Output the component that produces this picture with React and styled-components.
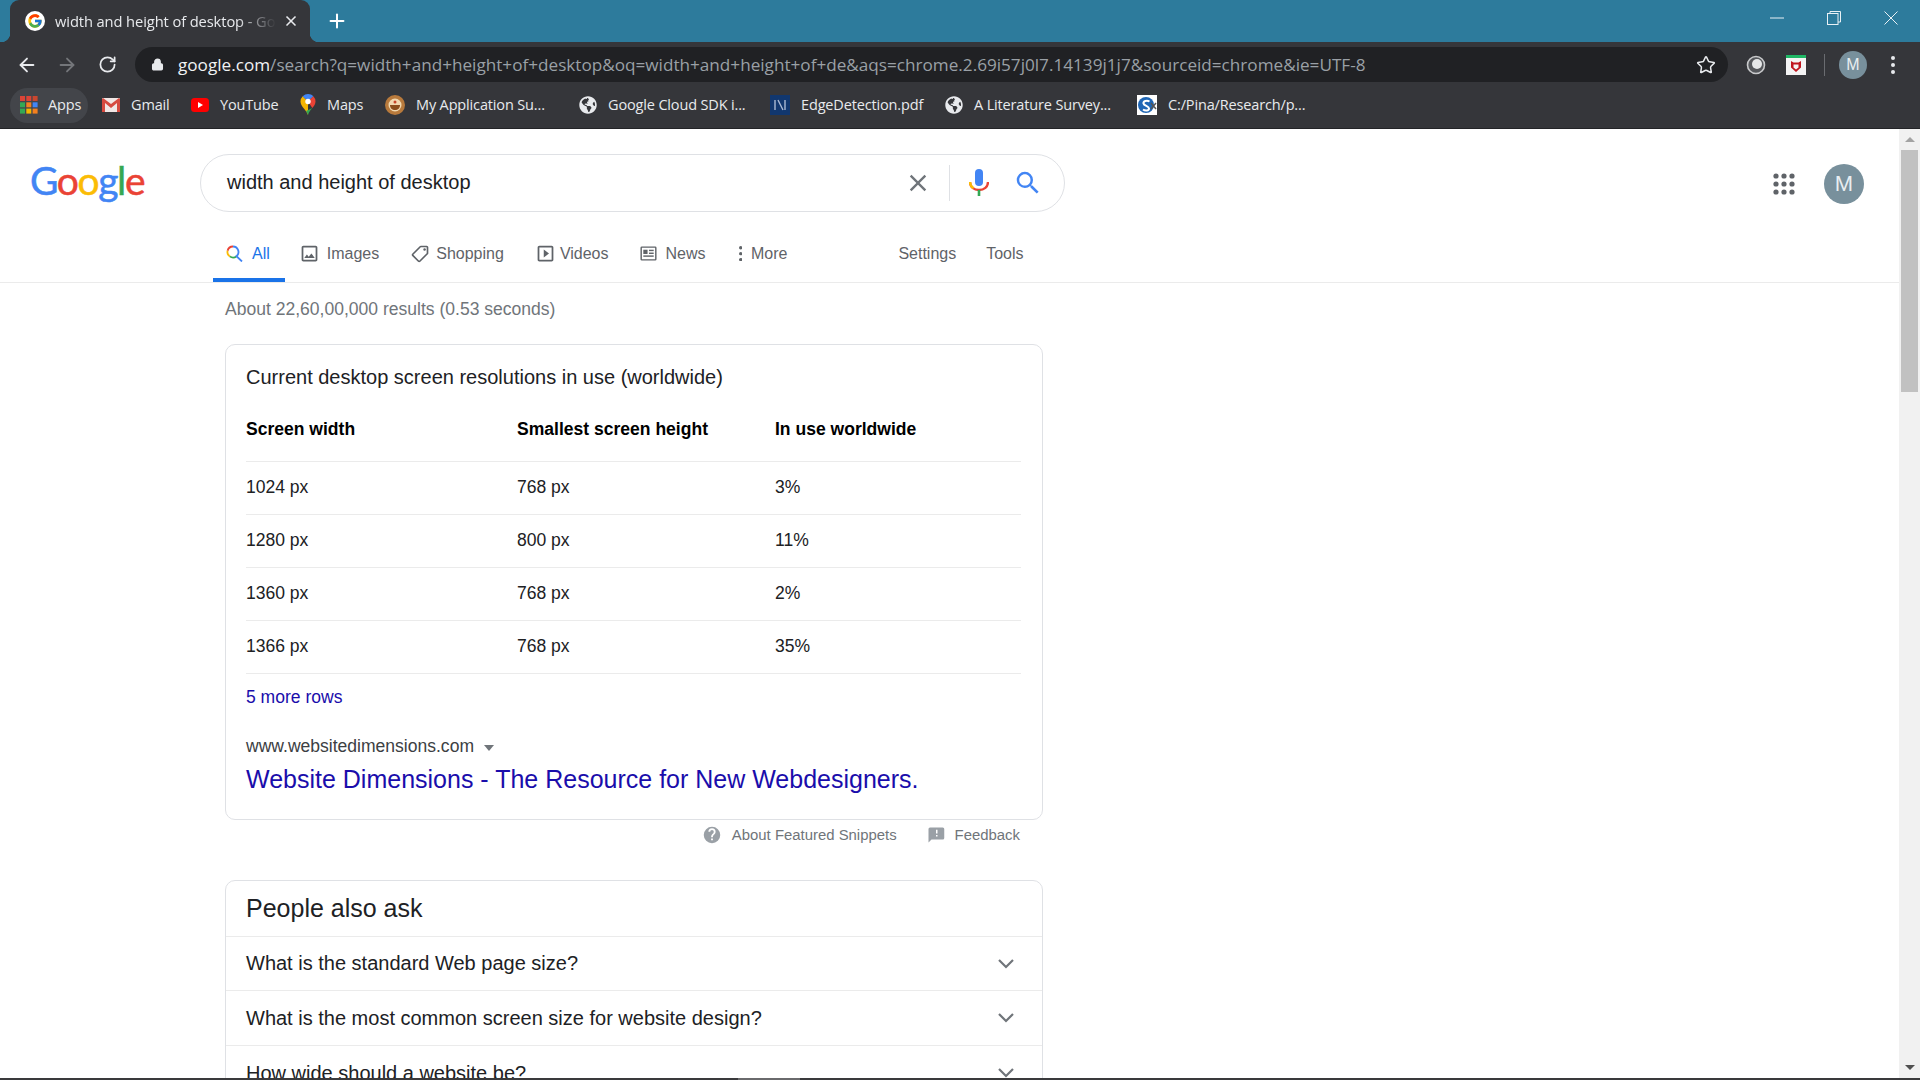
import React from "react";
import styled, { createGlobalStyle } from "styled-components";
import { FaGlobeAmericas } from "react-icons/fa";
import { FcGoogle } from "react-icons/fc";
import { ArrowLeft, ArrowRight, RotateCw, Star, Plus, X, Lock } from "lucide-react";

const ARIAL = `"Liberation Sans", Arial, sans-serif`;
const SEGOE = `"Open Sans", "Noto Sans", sans-serif`;
const BAR = "#35363a";

const GlobalStyle = createGlobalStyle`
  html, body {
    margin: 0;
    padding: 0;
    background: #fff;
    overflow: hidden;
  }
  * { box-sizing: border-box; }
`;

const Screen = styled.div`
  width: 1920px;
  height: 1080px;
  display: flex;
  flex-direction: column;
  overflow: hidden;
  font-family: ${ARIAL};
`;

/* browser chrome */
const TabStrip = styled.div`
  height: 42px;
  flex: none;
  display: flex;
  align-items: stretch;
  background: #2d7b9c;
  padding-left: 10px;
`;
const BrowserTab = styled.div`
  position: relative;
  width: 300px;
  display: flex;
  align-items: center;
  padding: 0 11px 0 15px;
  background: ${BAR};
  border-radius: 9px 9px 0 0;
  color: #e8eaed;
  font-family: ${SEGOE};
  font-size: 14.7px;
  letter-spacing: -0.1px;
  &::before, &::after {
    content: "";
    position: absolute;
    bottom: 0;
    width: 9px;
    height: 9px;
  }
  &::before {
    left: -9px;
    background: radial-gradient(circle at 0 0, transparent 9px, ${BAR} 9.5px);
  }
  &::after {
    right: -9px;
    background: radial-gradient(circle at 100% 0, transparent 9px, ${BAR} 9.5px);
  }
`;
const TabIcon = styled.span`
  width: 20px;
  height: 20px;
  flex: none;
  display: flex;
  align-items: center;
  justify-content: center;
  background: #fff;
  border-radius: 50%;
`;
const TabTitle = styled.span`
  flex: 1;
  margin-left: 10px;
  padding-bottom: 1px;
  white-space: nowrap;
  overflow: hidden;
  -webkit-mask-image: linear-gradient(90deg, #000 80%, transparent 97%);
  mask-image: linear-gradient(90deg, #000 80%, transparent 97%);
`;
const NewTab = styled.span`
  display: flex;
  align-items: center;
  margin-left: 16px;
  color: #fff;
`;
const WindowControls = styled.div`
  margin-left: auto;
  display: flex;
  padding-right: 1px;
`;
const WindowButton = styled.span`
  width: 57px;
  height: 36px;
  display: flex;
  align-items: center;
  justify-content: center;
  color: #e9f1f5;
`;

const Toolbar = styled.div`
  height: 46px;
  flex: none;
  display: flex;
  align-items: flex-start;
  padding: 5px 7px 0;
  background: ${BAR};
`;
const NavButton = styled.span`
  width: 40px;
  height: 35px;
  flex: none;
  display: flex;
  align-items: center;
  justify-content: center;
  color: ${(p) => (p.$disabled ? "#74767a" : "#e8eaed")};
`;
const Omnibox = styled.div`
  flex: 1;
  height: 35px;
  margin: 0 8px;
  display: flex;
  align-items: center;
  padding: 0 12px 0 16px;
  background: #202124;
  border-radius: 18px;
  color: #e8eaed;
`;
const Url = styled.div`
  margin-left: 14px;
  flex: 1;
  font-family: ${SEGOE};
  font-size: 17.15px;
  white-space: nowrap;
  color: #9aa0a6;
  b {
    font-weight: 400;
    color: #f1f3f4;
  }
`;
const Separator = styled.span`
  width: 1px;
  height: 22px;
  margin: 7px 8px 0;
  flex: none;
  background: #6a6c70;
`;
const ProfileBubble = styled.span`
  width: 28px;
  height: 28px;
  border-radius: 50%;
  background: #78909c;
  color: #e8eef1;
  font-size: 16px;
  display: flex;
  align-items: center;
  justify-content: center;
`;

const BookmarkBar = styled.div`
  height: 41px;
  flex: none;
  display: flex;
  align-items: flex-start;
  padding-left: 10px;
  background: ${BAR};
  border-bottom: 1px solid #232427;
  color: #e8eaed;
  font-family: ${SEGOE};
  font-size: 14.5px;
  letter-spacing: -0.15px;
`;
const Bookmark = styled.div`
  width: ${(p) => p.$width}px;
  height: 35px;
  flex: none;
  display: flex;
  align-items: center;
  gap: ${(p) => p.$gap || 11}px;
  padding: 0 0 2px 10px;
  white-space: nowrap;
  border-radius: 18px;
  background: ${(p) => (p.$pill ? "#43454a" : "transparent")};
  margin-right: ${(p) => (p.$pill ? 4 : 0)}px;
`;

/* page */
const Viewport = styled.div`
  flex: 1;
  min-height: 0;
  display: flex;
  background: #fff;
`;
const Page = styled.main`
  flex: 1;
  min-width: 0;
  overflow: hidden;
`;
const SearchHeader = styled.header`
  display: flex;
  align-items: flex-start;
  padding: 25px 35px 0 30px;
`;
const Logo = styled.div`
  width: 170px;
  margin-top: -4px;
  font-family: Lato, sans-serif;
  font-size: 39px;
  font-weight: 400;
  line-height: 60px;
  letter-spacing: -1.4px;
  -webkit-text-stroke: 0.5px currentColor;
`;
const LogoLetter = styled.span`
  color: ${(p) => p.$color};
`;
const SearchBox = styled.div`
  width: 865px;
  height: 58px;
  display: flex;
  align-items: center;
  padding: 0 21px 0 26px;
  border: 1px solid #dfe1e5;
  border-radius: 29px;
  font-size: 20px;
  color: #202124;
`;
const Query = styled.span`
  flex: 1;
  padding-bottom: 2px;
`;
const SearchDivider = styled.span`
  width: 1px;
  height: 36px;
  margin: 0 19px 0 17px;
  background: #dfe1e5;
`;
const MicWrap = styled.span`
  display: flex;
  margin-right: 24px;
`;
const HeaderRight = styled.div`
  margin-left: auto;
  display: flex;
  align-items: center;
  gap: 29px;
  padding-top: 10px;
`;
const Avatar = styled.span`
  width: 40px;
  height: 40px;
  border-radius: 50%;
  background: #78909c;
  color: #e8eef1;
  font-size: 22px;
  display: flex;
  align-items: center;
  justify-content: center;
`;

const TabsRow = styled.nav`
  height: 71px;
  display: flex;
  align-items: flex-end;
  gap: 8px;
  padding-left: 213px;
  border-bottom: 1px solid #ebebeb;
  font-size: 16px;
  color: #5f6368;
`;
const SearchTab = styled.a`
  height: 48px;
  display: flex;
  align-items: center;
  gap: ${(p) => p.$gap || 9}px;
  padding: 0 ${(p) => p.$right || 13}px 5px ${(p) => (p.$active ? 13 : 10)}px;
  margin-right: ${(p) => (p.$active ? -4 : 0)}px;
  color: ${(p) => (p.$active ? "#1a73e8" : "#5f6368")};
  border-bottom: ${(p) => (p.$active ? "4px solid #1a73e8" : "4px solid transparent")};
`;
const TabsTools = styled.div`
  margin-left: 87px;
  display: flex;
  gap: 7px;
`;

const Results = styled.div`
  width: 818px;
  margin-left: 225px;
`;
const Stats = styled.div`
  padding-top: 14px;
  margin-bottom: 23px;
  line-height: 24px;
  font-size: 17.55px;
  color: #70757a;
`;
const Card = styled.section`
  border: 1px solid #dfe1e5;
  border-radius: 10px;
`;
const SnippetBody = styled.div`
  padding: 20px 21px 25px 20px;
`;
const SnippetTitle = styled.div`
  font-size: 20px;
  line-height: 24px;
  color: #202124;
`;
const ResolutionTable = styled.table`
  width: 100%;
  margin-top: 28px;
  border-collapse: collapse;
  table-layout: fixed;
  font-size: 17.55px;
  color: #202124;
`;
const HeadCell = styled.th`
  width: ${(p) => p.$width}px;
  padding: 0 0 20px;
  height: 44px;
  line-height: 24px;
  font-weight: 700;
  text-align: left;
  color: #000;
  border-bottom: 1px solid #ebebeb;
`;
const Cell = styled.td`
  height: 53px;
  padding: 0 0 2px;
  border-bottom: 1px solid #ebebeb;
`;
const MoreRows = styled.a`
  display: block;
  margin-top: 11px;
  line-height: 24px;
  font-size: 17.55px;
  color: #1a0dab;
`;
const Source = styled.div`
  margin-top: 25px;
  display: flex;
  align-items: center;
  gap: 10px;
  line-height: 24px;
  font-size: 17.55px;
  color: #3c4043;
`;
const Caret = styled.span`
  width: 0;
  height: 0;
  margin-top: 3px;
  border-left: 5px solid transparent;
  border-right: 5px solid transparent;
  border-top: 6px solid #70757a;
`;
const ResultLink = styled.a`
  display: block;
  margin-top: 6px;
  line-height: 30px;
  font-size: 25px;
  color: #1a0dab;
`;
const SnippetFooter = styled.div`
  height: 24px;
  margin-top: 3px;
  padding-right: 23px;
  display: flex;
  justify-content: flex-end;
  align-items: center;
  gap: 30px;
  font-size: 14.9px;
  color: #70757a;
`;
const FooterItem = styled.span`
  display: flex;
  align-items: center;
  gap: ${(p) => p.$gap}px;
`;
const AskCard = styled(Card)`
  margin-top: 33px;
  border-radius: 10px 10px 0 0;
`;
const AskTitle = styled.h2`
  margin: 0;
  height: 56px;
  padding-left: 20px;
  display: flex;
  align-items: center;
  font-size: 25px;
  font-weight: 400;
  color: #202124;
  border-bottom: 1px solid #ebebeb;
`;
const Question = styled.div`
  height: ${(p) => p.$height}px;
  padding: 0 28px 0 20px;
  display: flex;
  align-items: center;
  justify-content: space-between;
  font-size: 20px;
  color: #202124;
  border-bottom: 1px solid #ebebeb;
`;

const Scrollbar = styled.aside`
  width: 21px;
  flex: none;
  display: flex;
  flex-direction: column;
  align-items: center;
  background: #f1f1f1;
`;
const ScrollArrow = styled.span`
  height: 21px;
  flex: none;
  display: flex;
  align-items: center;
  justify-content: center;
  &::after {
    content: "";
    border-left: 5px solid transparent;
    border-right: 5px solid transparent;
    ${(p) =>
      p.$down
        ? "border-top: 5px solid #505050;"
        : "border-bottom: 5px solid #a3a3a3;"}
  }
`;
const ScrollThumb = styled.span`
  width: 17px;
  height: 242px;
  flex: none;
  background: #c1c1c1;
`;
const ScrollSpacer = styled.span`
  flex: 1;
`;
const Taskbar = styled.div`
  height: 2px;
  flex: none;
  background: linear-gradient(90deg, #3a3a3c 0 738px, #6a6a6c 738px 800px, #3a3a3c 800px);
`;

/* small drawings */
const AppsIcon = () => {
  const colors = ["#db4437", "#db4437", "#c9472f", "#34a853", "#f4801f", "#4285f4", "#34a853", "#f4b400", "#f4801f"];
  return (
    <svg width="18" height="18" viewBox="0 0 18 18">
      {colors.map((c, i) => (
        <rect key={i} x={(i % 3) * 6.3} y={Math.floor(i / 3) * 6.3} width="5" height="5" fill={c} />
      ))}
    </svg>
  );
};
const GmailIcon = () => (
  <svg width="18" height="14" viewBox="0 0 18 14">
    <rect width="18" height="14" rx="1" fill="#f1e7e5" />
    <path d="M0 1v13h3V5l6 5 6-5v9h3V1l-1-1-8 6-8-6z" fill="#d64a3f" />
  </svg>
);
const YoutubeIcon = () => (
  <svg width="18" height="14" viewBox="0 0 18 14">
    <rect width="18" height="14" rx="3.5" fill="#f00" />
    <path d="M7 4l5 3-5 3z" fill="#fff" />
  </svg>
);
const MapsIcon = () => (
  <svg width="18" height="21" viewBox="-1.500 0 18 21">
    <path d="M7.500 21C6 16 0 12.500 0 7.500a7.500 7.500 0 0 1 2.200-5.300L7.500 7.500z" fill="#f4b400" />
    <path d="M2.200 2.200A7.500 7.500 0 0 1 7.500 0c2.100 0 4 .9 5.300 2.200L7.500 7.500z" fill="#4285f4" />
    <path d="M12.800 2.200A7.500 7.500 0 0 1 15 7.500c0 2.500-1.500 4.500-3.200 6.500L7.500 7.500z" fill="#ea4335" />
    <path d="M11.800 14c-1.800 2-3.500 4-4.300 7-.4-1.500-1.200-2.800-2-4z" fill="#34a853" />
    <circle cx="7.500" cy="7.500" r="2.700" fill="#fff" />
  </svg>
);
const SealIcon = () => (
  <svg width="20" height="20" viewBox="0 0 20 20">
    <circle cx="10" cy="10" r="10" fill="#b87a3c" />
    <circle cx="10" cy="10" r="6.500" fill="#f2d9b0" />
    <path d="M5 10h10c0 3-2 5-5 5s-5-2-5-5z" fill="#8c4f1d" />
    <circle cx="10" cy="7" r="1.500" fill="#c8472a" />
  </svg>
);
const EdgeIcon = () => (
  <svg width="20" height="20" viewBox="0 0 20 20">
    <rect width="20" height="20" fill="#11376f" />
    <path d="M5 5v10M8 5l5 10M15 5v10" stroke="#a9b9d4" strokeWidth="1.400" fill="none" />
  </svg>
);
const ScholarIcon = () => (
  <svg width="20" height="20" viewBox="0 0 20 20">
    <rect width="20" height="20" fill="#fff" />
    <circle cx="9" cy="10" r="8" fill="#1f66b5" />
    <path d="M12.500 6.500C10 5 6 6 6.500 8.500S12 11 12 13.500s-4 2.500-6 1" stroke="#fff" strokeWidth="2" fill="none" />
    <path d="M14 8l5 6M19 8l-5 6" stroke="#555" strokeWidth="1.500" />
  </svg>
);
const ExtensionCircle = () => (
  <svg width="20" height="20" viewBox="0 0 20 20">
    <circle cx="10" cy="10" r="8.500" fill="#55575b" stroke="#c8c9cb" strokeWidth="1.600" />
    <circle cx="11" cy="9" r="5" fill="#e6e7e8" />
  </svg>
);
const McafeeIcon = () => (
  <svg width="20" height="20" viewBox="0 0 20 20">
    <rect width="20" height="20" fill="#f4f4f4" />
    <rect width="20" height="3" fill="#1fb765" />
    <path d="M5 6l2.500 1.500h5L15 6v6.500L10 17l-5-4.500z" fill="#c0161f" />
    <path d="M7.500 9.500h5v3L10 14.500l-2.500-2z" fill="#f4f4f4" />
  </svg>
);
const ChromeDots = ({ color = "#e8eaed", size = 4 }) => (
  <svg width={size} height={size * 4.5} viewBox="0 0 4 18">
    <circle cx="2" cy="2" r="2" fill={color} />
    <circle cx="2" cy="9" r="2" fill={color} />
    <circle cx="2" cy="16" r="2" fill={color} />
  </svg>
);
const MinimizeIcon = () => (
  <svg width="14" height="10" viewBox="0 0 14 10">
    <path d="M0 5h14" stroke="currentColor" strokeWidth="1" />
  </svg>
);
const RestoreIcon = () => (
  <svg width="14" height="14" viewBox="0 0 14 14" fill="none" stroke="currentColor">
    <rect x=".5" y="2.500" width="10.500" height="11" />
    <path d="M3 2.500V.5h10.500v10.500H11" />
  </svg>
);
const CloseIcon = () => (
  <svg width="14" height="14" viewBox="0 0 14 14" stroke="currentColor" strokeWidth="1">
    <path d="M.5.5l13 13M13.500.5l-13 13" />
  </svg>
);
const ClearIcon = () => (
  <svg width="28" height="28" viewBox="0 0 24 24" fill="#70757a">
    <path d="M19 6.410L17.590 5 12 10.590 6.410 5 5 6.410 10.590 12 5 17.590 6.410 19 12 13.410 17.590 19 19 17.590 13.410 12z" />
  </svg>
);
const MicIcon = () => (
  <svg width="20" height="28" viewBox="0 0 20 28">
    <rect x="6" y="0" width="8" height="17" rx="4" fill="#4285f4" />
    <path d="M1 13c0 5 4 8 9 8s9-3 9-8" fill="none" stroke="#ea4335" strokeWidth="2.400" />
    <path d="M1 13c0 3 1.500 5 3.500 6.300" fill="none" stroke="#fbbc05" strokeWidth="2.400" />
    <rect x="8.700" y="21" width="2.600" height="6" fill="#34a853" />
  </svg>
);
const SearchIcon = () => (
  <svg width="30" height="30" viewBox="0 0 24 24" fill="#4285f4">
    <path d="M15.500 14h-.79l-.28-.27A6.471 6.471 0 0 0 16 9.500 6.500 6.500 0 1 0 9.500 16c1.610 0 3.090-.59 4.230-1.570l.27.28v.79l5 4.990L20.490 19l-4.990-5zm-6 0C7.010 14 5 11.990 5 9.500S7.010 5 9.500 5 14 7.010 14 9.500 11.990 14 9.500 14z" />
  </svg>
);
const AppsGrid = () => (
  <svg width="22" height="22" viewBox="0 0 22 22" fill="#5f6368">
    {[0, 1, 2, 3, 4, 5, 6, 7, 8].map((i) => (
      <circle key={i} cx={3 + (i % 3) * 8} cy={3 + Math.floor(i / 3) * 8} r="2.600" />
    ))}
  </svg>
);
const AllIcon = () => (
  <svg width="17" height="17" viewBox="0 0 17 17" fill="none" strokeWidth="1.800">
    <path d="M7 1.500a5.500 5.500 0 0 0-5.400 4.200" stroke="#ea4335" />
    <path d="M1.600 5.700A5.500 5.500 0 0 0 4 11.600" stroke="#fbbc05" />
    <path d="M4 11.600a5.500 5.500 0 0 0 6.500-.4" stroke="#34a853" />
    <path d="M7 1.500a5.500 5.500 0 0 1 3.500 9.700L16 16.500" stroke="#4285f4" />
  </svg>
);
const ImagesIcon = () => (
  <svg width="21" height="21" viewBox="0 0 24 24" fill="#5f6368">
    <path d="M19 5v14H5V5h14m0-2H5c-1.100 0-2 .9-2 2v14c0 1.100.9 2 2 2h14c1.100 0 2-.9 2-2V5c0-1.100-.9-2-2-2zm-4.860 8.860l-3 3.870L9 13.140 6 17h12l-3.860-5.140z" />
  </svg>
);
const ShoppingIcon = () => (
  <svg width="20" height="20" viewBox="0 0 24 24" fill="#5f6368" style={{ transform: "scaleX(-1)" }}>
    <path d="M21.410 11.580l-9-9C12.050 2.220 11.550 2 11 2H4c-1.100 0-2 .9-2 2v7c0 .55.22 1.050.59 1.420l9 9c.36.36.86.58 1.410.58s1.050-.22 1.410-.59l7-7c.37-.36.59-.86.59-1.410s-.23-1.060-.59-1.420zM13 20.010L4 11V4h7v-.01l9 9-7 7.020z" />
    <circle cx="6.500" cy="6.500" r="1.500" />
  </svg>
);
const VideosIcon = () => (
  <svg width="21" height="21" viewBox="0 0 24 24" fill="#5f6368">
    <path d="M10 16.500l6-4.500-6-4.500v9zM19 3H5c-1.100 0-2 .9-2 2v14c0 1.100.9 2 2 2h14c1.100 0 2-.9 2-2V5c0-1.100-.9-2-2-2zm0 16H5V5h14v14z" />
  </svg>
);
const NewsIcon = () => (
  <svg width="17" height="17" viewBox="0 0 18 18" fill="#5f6368">
    <path d="M2 1.500h14A1.500 1.500 0 0 1 17.500 3v12a1.500 1.500 0 0 1-1.500 1.500H2A1.500 1.500 0 0 1 .5 15V3A1.500 1.500 0 0 1 2 1.500zm0 1.500v12h14V3z" fillRule="evenodd" />
    <rect x="3.500" y="5" width="4.500" height="4.500" />
    <rect x="9.500" y="5" width="5" height="1.500" />
    <rect x="9.500" y="8" width="5" height="1.500" />
    <rect x="3.500" y="11" width="11" height="1.500" />
  </svg>
);
const HelpIcon = () => (
  <svg width="18" height="18" viewBox="0 0 24 24" fill="#9aa0a6">
    <path d="M12 1a11 11 0 1 0 0 22 11 11 0 0 0 0-22zm1.200 18h-2.400v-2.400h2.400V19zm2.500-8.400l-1.100 1.100c-.9.9-1.400 1.600-1.400 3.300h-2.400v-.6c0-1.300.5-2.500 1.400-3.400l1.500-1.500c.4-.4.700-1 .7-1.700a2.400 2.400 0 0 0-4.800 0H7.200a4.800 4.800 0 0 1 9.600 0c0 1.100-.4 2-1.100 2.800z" />
  </svg>
);
const FeedbackIcon = () => (
  <svg width="18" height="18" viewBox="0 0 24 24" fill="#9aa0a6">
    <path d="M21 2H4a2 2 0 0 0-2 2v18l4-4h15a2 2 0 0 0 2-2V4a2 2 0 0 0-2-2zm-7 12h-2v-2h2v2zm0-4h-2V5h2v5z" />
  </svg>
);
const Chevron = () => (
  <svg width="16" height="10" viewBox="0 0 16 10" fill="none" stroke="#70757a" strokeWidth="2.200">
    <path d="M1 1l7 7 7-7" />
  </svg>
);

const bookmarks = [
  { label: "Gmail", width: 89, icon: <GmailIcon /> },
  { label: "YouTube", width: 108, icon: <YoutubeIcon /> },
  { label: "Maps", width: 86, icon: <MapsIcon />, gap: 10 },
  { label: "My Application Su...", width: 194, icon: <SealIcon /> },
  { label: "Google Cloud SDK i...", width: 191, icon: <FaGlobeAmericas size={18} /> },
  { label: "EdgeDetection.pdf", width: 175, icon: <EdgeIcon /> },
  { label: "A Literature Survey...", width: 192, icon: <FaGlobeAmericas size={18} /> },
  { label: "C:/Pina/Research/p...", width: 190, icon: <ScholarIcon /> },
];

const rows = [
  ["1024 px", "768 px", "3%"],
  ["1280 px", "800 px", "11%"],
  ["1360 px", "768 px", "2%"],
  ["1366 px", "768 px", "35%"],
];

const questions = [
  { text: "What is the standard Web page size?", height: 54 },
  { text: "What is the most common screen size for website design?", height: 55 },
  { text: "How wide should a website be?", height: 55 },
];

const logoLetters = [
  ["G", "#4285f4"],
  ["o", "#ea4335"],
  ["o", "#fbbc05"],
  ["g", "#4285f4"],
  ["l", "#34a853"],
  ["e", "#ea4335"],
];

export default function App() {
  return (
    <Screen>
      <GlobalStyle />
      <TabStrip>
        <BrowserTab>
          <TabIcon>
            <FcGoogle size={16} />
          </TabIcon>
          <TabTitle>width and height of desktop - Google Search</TabTitle>
          <X size={16} strokeWidth={2.5} color="#e8eaed" />
        </BrowserTab>
        <NewTab>
          <Plus size={22} strokeWidth={2.2} />
        </NewTab>
        <WindowControls>
          <WindowButton>
            <MinimizeIcon />
          </WindowButton>
          <WindowButton>
            <RestoreIcon />
          </WindowButton>
          <WindowButton>
            <CloseIcon />
          </WindowButton>
        </WindowControls>
      </TabStrip>

      <Toolbar>
        <NavButton>
          <ArrowLeft size={22} />
        </NavButton>
        <NavButton $disabled>
          <ArrowRight size={22} />
        </NavButton>
        <NavButton>
          <RotateCw size={19} strokeWidth={2.2} />
        </NavButton>
        <Omnibox>
          <Lock size={13} fill="#e8eaed" strokeWidth={2.4} />
          <Url>
            <b>google.com</b>/search?q=width+and+height+of+desktop&amp;oq=width+and+height+of+de&amp;aqs=chrome.2.69i57j0l7.14139j1j7&amp;sourceid=chrome&amp;ie=UTF-8
          </Url>
          <Star size={20} strokeWidth={1.8} />
        </Omnibox>
        <NavButton>
          <ExtensionCircle />
        </NavButton>
        <NavButton>
          <McafeeIcon />
        </NavButton>
        <Separator />
        <NavButton>
          <ProfileBubble>M</ProfileBubble>
        </NavButton>
        <NavButton>
          <ChromeDots />
        </NavButton>
      </Toolbar>

      <BookmarkBar>
        <Bookmark $width={78} $pill $gap={10}>
          <AppsIcon />
          Apps
        </Bookmark>
        {bookmarks.map((b) => (
          <Bookmark key={b.label} $width={b.width} $gap={b.gap}>
            {b.icon}
            {b.label}
          </Bookmark>
        ))}
      </BookmarkBar>

      <Viewport>
        <Page>
          <SearchHeader>
            <Logo>
              {logoLetters.map(([l, c], i) => (
                <LogoLetter key={i} $color={c}>
                  {l}
                </LogoLetter>
              ))}
            </Logo>
            <SearchBox>
              <Query>width and height of desktop</Query>
              <ClearIcon />
              <SearchDivider />
              <MicWrap>
                <MicIcon />
              </MicWrap>
              <SearchIcon />
            </SearchBox>
            <HeaderRight>
              <AppsGrid />
              <Avatar>M</Avatar>
            </HeaderRight>
          </SearchHeader>

          <TabsRow>
            <SearchTab $active $right={15}>
              <AllIcon />
              All
            </SearchTab>
            <SearchTab $gap={7}>
              <ImagesIcon />
              Images
            </SearchTab>
            <SearchTab $gap={6}>
              <ShoppingIcon />
              Shopping
            </SearchTab>
            <SearchTab $gap={4}>
              <VideosIcon />
              Videos
            </SearchTab>
            <SearchTab $gap={9} $right={15}>
              <NewsIcon />
              News
            </SearchTab>
            <SearchTab $right={6} $gap={9}>
              <ChromeDots color="#5f6368" size={3.4} />
              More
            </SearchTab>
            <TabsTools>
              <SearchTab>Settings</SearchTab>
              <SearchTab>Tools</SearchTab>
            </TabsTools>
          </TabsRow>

          <Results>
            <Stats>About 22,60,00,000 results (0.53 seconds)</Stats>
            <Card>
              <SnippetBody>
                <SnippetTitle>Current desktop screen resolutions in use (worldwide)</SnippetTitle>
                <ResolutionTable>
                  <thead>
                    <tr>
                      <HeadCell $width={271}>Screen width</HeadCell>
                      <HeadCell $width={258}>Smallest screen height</HeadCell>
                      <HeadCell>In use worldwide</HeadCell>
                    </tr>
                  </thead>
                  <tbody>
                    {rows.map((r) => (
                      <tr key={r[0]}>
                        {r.map((v, i) => (
                          <Cell key={i}>{v}</Cell>
                        ))}
                      </tr>
                    ))}
                  </tbody>
                </ResolutionTable>
                <MoreRows>5 more rows</MoreRows>
                <Source>
                  www.websitedimensions.com
                  <Caret />
                </Source>
                <ResultLink>Website Dimensions - The Resource for New Webdesigners.</ResultLink>
              </SnippetBody>
            </Card>
            <SnippetFooter>
              <FooterItem $gap={11}>
                <HelpIcon />
                About Featured Snippets
              </FooterItem>
              <FooterItem $gap={10}>
                <FeedbackIcon />
                Feedback
              </FooterItem>
            </SnippetFooter>
            <AskCard>
              <AskTitle>People also ask</AskTitle>
              {questions.map((q) => (
                <Question key={q.text} $height={q.height}>
                  {q.text}
                  <Chevron />
                </Question>
              ))}
            </AskCard>
          </Results>
        </Page>
        <Scrollbar>
          <ScrollArrow />
          <ScrollThumb />
          <ScrollSpacer />
          <ScrollArrow $down />
        </Scrollbar>
      </Viewport>
      <Taskbar />
    </Screen>
  );
}
